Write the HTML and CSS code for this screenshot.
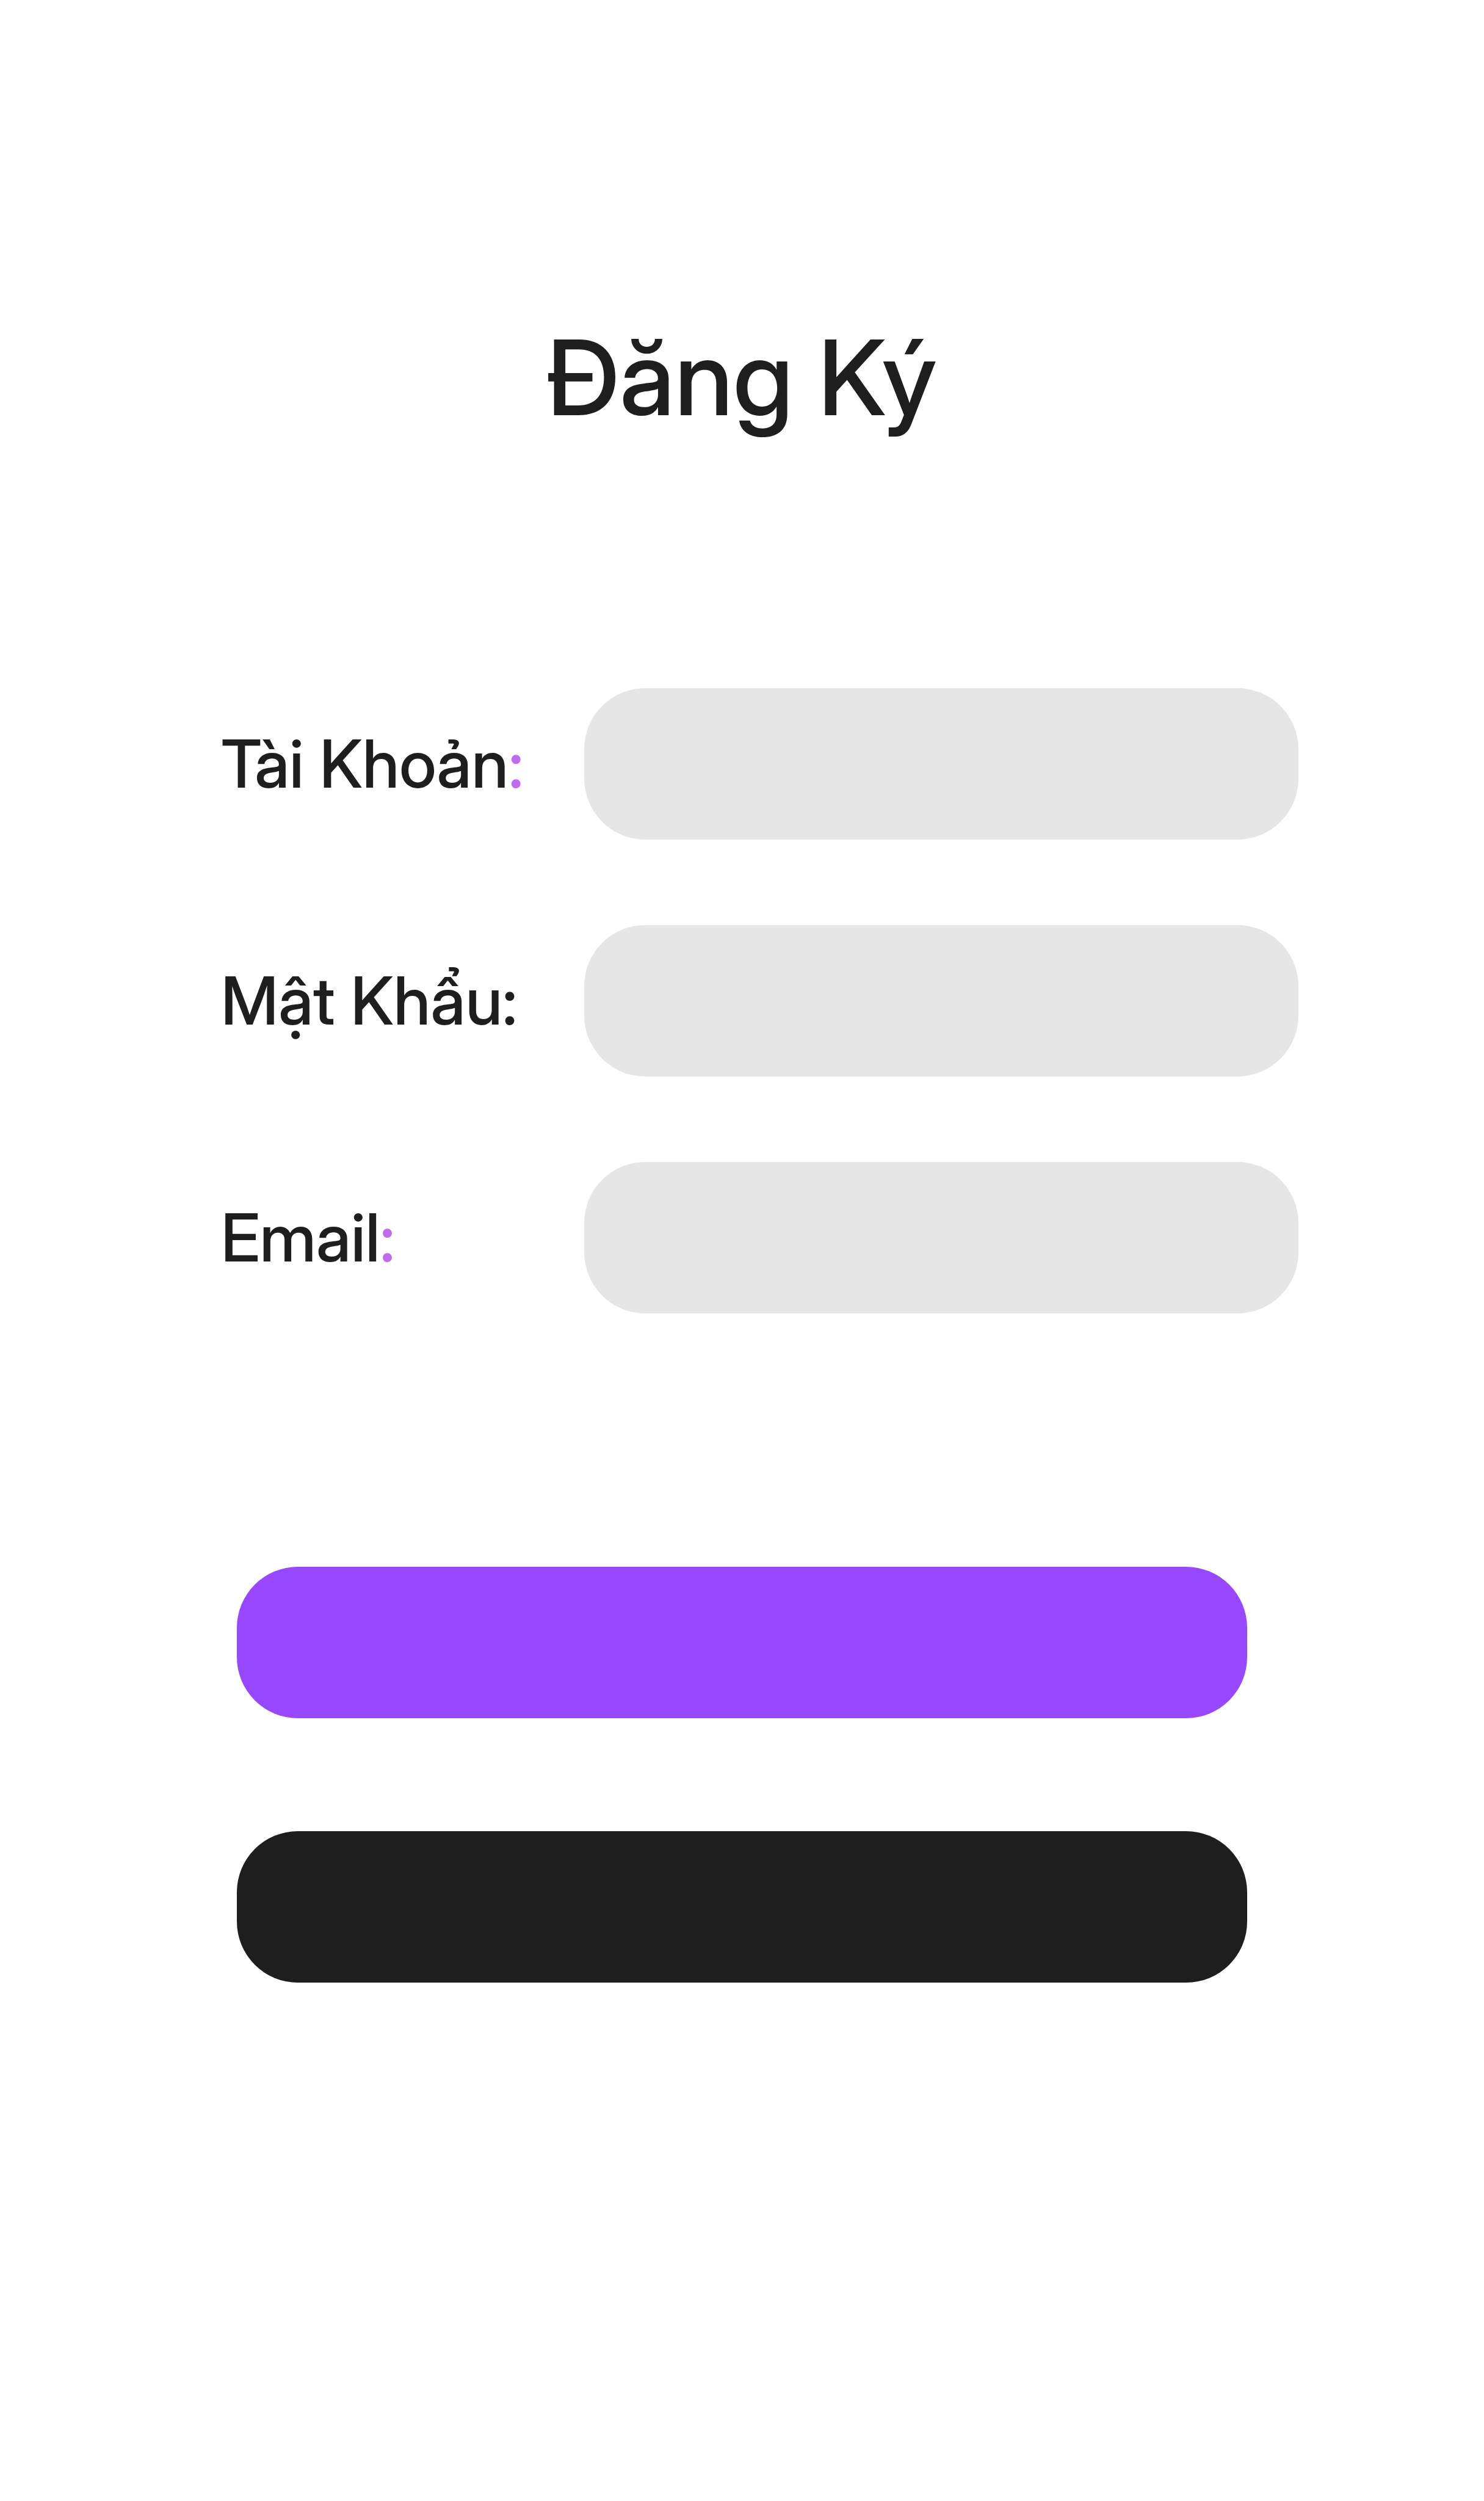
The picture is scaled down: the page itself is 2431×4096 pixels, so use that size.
FILE: index.html
```html
<!DOCTYPE html>
<html lang="vi">
<head>
  <meta charset="utf-8">
  <meta name="viewport" content="width=device-width, initial-scale=1">
  <title>Đăng Ký</title>
  <link rel="stylesheet" href="styles.css">
</head>
<body>
  <main class="signup">
    <h1 class="title">Đăng Ký</h1>
    <form class="form">
      <div class="fields">
        <label class="label" for="username">Tài Khoản<span class="accent">:</span></label>
        <input class="input" id="username" name="username" type="text">
        <label class="label" for="password">Mật Khẩu:</label>
        <input class="input" id="password" name="password" type="password">
        <label class="label" for="email">Email<span class="accent">:</span></label>
        <input class="input" id="email" name="email" type="email">
      </div>
      <div class="actions">
        <button class="button button-primary" type="submit" aria-label="Đăng Ký"></button>
        <button class="button button-dark" type="button" aria-label="Đăng Nhập"></button>
      </div>
    </form>
  </main>
</body>
</html>
```
FILE: styles.css
```css
* {
  box-sizing: border-box;
}

body {
  margin: 0;
  background: #fff;
  color: #1e1e1e;
  font-family: "Inter Display", Inter, "Liberation Sans", sans-serif;
  font-weight: 500;
}

.signup {
  padding: 516px 0 400px;
}

.title {
  margin: 0 0 407px;
  font-size: 171px;
  font-weight: 500;
  line-height: 204px;
  text-align: center;
}

.fields {
  display: grid;
  grid-template-columns: 595px 1fr;
  row-gap: 140px;
  align-items: center;
  padding: 0 304px 0 362px;
}

.label {
  font-size: 108px;
  line-height: 128px;
  white-space: nowrap;
}

.accent {
  color: #bf6aee;
}

.input {
  width: 100%;
  height: 248px;
  padding: 0 80px;
  border: 0;
  border-radius: 100px;
  background: #e6e6e6;
  color: inherit;
  font: inherit;
  font-size: 108px;
}

.actions {
  display: grid;
  row-gap: 185px;
  padding: 415px 388px 0;
}

.button {
  height: 248px;
  border: 0;
  border-radius: 100px;
}

.button-primary {
  background: #9747ff;
}

.button-dark {
  background: #1e1e1e;
}
```
